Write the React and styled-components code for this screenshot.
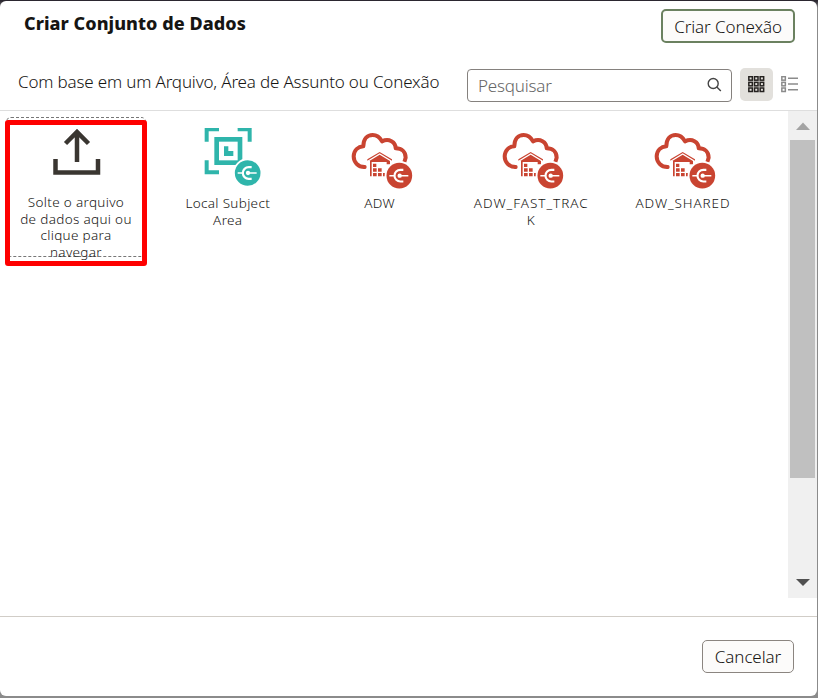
import React from "react";
import styled, { createGlobalStyle } from "styled-components";

const GlobalStyle = createGlobalStyle`
  * { box-sizing: border-box; }
  body { margin: 0; background: #8b8b8b; font-family: "Noto Sans", "Open Sans", sans-serif; font-weight: 300; }
  svg { display: block; flex: none; }
`;

const Backdrop = styled.div`
  width: 818px;
  height: 698px;
  padding: 1px 1px 2px 0;
  background: linear-gradient(#2b2730 0 1px, #8b8b8b 8px);
  overflow: hidden;
`;

const Dialog = styled.section`
  height: 695px;
  display: flex;
  flex-direction: column;
  background: #fff;
  border-radius: 6px;
  overflow: hidden;
`;

const TitleBar = styled.header`
  height: 58px;
  padding: 8px 22px 0 24px;
  display: flex;
  justify-content: space-between;
  align-items: flex-start;
`;

const Title = styled.h1`
  margin: 2px 0 0;
  font-size: 18px;
  line-height: 24px;
  font-weight: 800;
  letter-spacing: 0.05px;
  color: #161513;
`;

const Button = styled.button`
  width: ${(p) => p.$width};
  height: ${(p) => p.$height};
  padding: ${(p) => (p.$focused ? "2px 0 0" : "0")};
  border: ${(p) => (p.$focused ? "2px solid #6b8160" : "1px solid #8b8580")};
  border-radius: 5px;
  background: #fcfbfa;
  color: #161513;
  font: 300 17px/24px "Noto Sans", sans-serif;
  letter-spacing: -0.1px;
  white-space: nowrap;
`;

const Toolbar = styled.div`
  height: 52px;
  padding: 9px 11px 0 18px;
  display: flex;
  align-items: flex-start;
  border-bottom: 1px solid #dedede;
`;

const Caption = styled.div`
  width: 449px;
  padding-top: 2px;
  font-size: 17px;
  line-height: 24px;
  letter-spacing: -0.17px;
  color: #161513;
  white-space: nowrap;
`;

const SearchField = styled.label`
  width: 265px;
  height: 33px;
  margin: 1px 8px 0 0;
  padding: 0 9px 0 10px;
  display: flex;
  align-items: center;
  justify-content: space-between;
  border: 1px solid #85817e;
  border-radius: 4px;
`;

const SearchInput = styled.input`
  width: 180px;
  padding: 0;
  border: 0;
  outline: 0;
  background: transparent;
  font: 300 17px/24px "Noto Sans", sans-serif;
  letter-spacing: -0.2px;
  &::placeholder { color: #666; opacity: 1; }
`;

const ViewButton = styled.button`
  width: 33px;
  height: 33px;
  padding: 0;
  display: grid;
  place-items: center;
  border: 0;
  border-radius: 5px;
  background: ${(p) => (p.$active ? "#e2e0dc" : "transparent")};
`;

const Body = styled.main`
  height: 506px;
  display: flex;
  justify-content: space-between;
  border-bottom: 1px solid #d1cdc7;
`;

const Tiles = styled.div`
  display: grid;
  grid-template-columns: repeat(5, 151.75px);
  align-content: start;
  padding-top: 6px;
`;

const Tile = styled.div`
  position: relative;
  width: 140px;
  height: 140px;
  margin-left: 6px;
  padding-top: 10px;
  border: 1px dashed ${(p) => (p.$drop ? "#777" : "transparent")};
  border-radius: 5px;
  display: flex;
  flex-direction: column;
  align-items: center;
`;

const IconBox = styled.div`
  flex: none;
  height: ${(p) => p.$height || "67px"};
  padding-left: ${(p) => p.$indent};
  display: flex;
  align-items: flex-start;
`;

const Label = styled.div`
  flex: none;
  width: 118px;
  text-align: center;
  font-size: 13.5px;
  line-height: 16.7px;
  letter-spacing: ${(p) => p.$track || "0.33px"};
  color: #161513;
  white-space: nowrap;
`;

const Highlight = styled.div`
  position: absolute;
  top: 2px;
  left: -2px;
  width: 142px;
  height: 146px;
  border: 5px solid #fe0000;
  border-radius: 3px;
`;

const Scrollbar = styled.div`
  width: 29px;
  height: 487px;
  display: flex;
  flex-direction: column;
  align-items: center;
  justify-content: space-between;
  background: #f0f0f0;
  padding: 11px 0 12px;
`;

const Thumb = styled.div`
  width: 25px;
  height: 338px;
  margin: 10px 0 auto;
  background: #c0c0c0;
`;

const Footer = styled.footer`
  flex: 1;
  padding: 23px 23px 0 0;
  display: flex;
  justify-content: flex-end;
  align-items: flex-start;
`;

const SearchIcon = () => (
  <svg width="15" height="17" viewBox="0 0 15 17" fill="none" stroke="#444" strokeWidth="1.4">
    <circle cx="6.2" cy="6.5" r="5" />
    <path d="M9.8 10.1 13.8 14" />
  </svg>
);

const cells = [2, 19, 36];

const GridIcon = () => (
  <svg width="17" height="17" viewBox="0 2 51 51" fill="none" stroke="#24211f" strokeWidth="4.5">
    {cells.map((y) => cells.map((x) => <rect key={x + "-" + y} x={x + 0.5} y={y + 2} width="10.5" height="10.5" />))}
  </svg>
);

const ListIcon = () => (
  <svg width="17" height="17" viewBox="0 2 51 51" fill="none" stroke="#8b8b8b" strokeWidth="4.5">
    {cells.map((y) => (
      <g key={y}>
        <rect x="2.5" y={y + 2} width="10.5" height="10.5" />
        <path d={`M21 ${y + 7}h30`} />
      </g>
    ))}
  </svg>
);

const UploadIcon = () => (
  <svg width="48" height="48" viewBox="0 0 48 48" fill="none" stroke="#3a3631" strokeWidth="4.5">
    <path d="M24 34V4M12.5 15.5 24 4l11.5 11.5M2.5 31v13.5h42.5V31" />
  </svg>
);

const ConnectionBadge = ({ x, y, color }) => (
  <g transform={`translate(${x} ${y})`} fill="none">
    <circle r="44" fill="#fff" />
    <circle r="38.5" fill={color} />
    <g stroke="#fff">
      <path d="M12 -17.5H3A17.5 17.5 0 0 0 3 17.5H12" strokeWidth="6.5" />
      <path d="M0 0H27M-30 0H-16" strokeWidth="4.5" />
    </g>
    <circle cx="1" r="6.5" fill="#fff" />
  </g>
);

const SubjectIcon = () => (
  <svg width="58" height="60" viewBox="86 39 174 180">
    <g fill="none" stroke="#2fb5ab" strokeWidth="12">
      <path d="M94 80V43H131M187 43H223V80M94 136V172H131" />
      <rect x="124" y="73" width="70" height="70" strokeWidth="14" />
    </g>
    <path d="M146 94h13v14h15v15h-28z" fill="#2fb5ab" />
    <path d="M90 37H131V40H90ZM187 37H228V40H187Z" fill="#2fb5ab" />
    <ConnectionBadge x={217} y={174} color="#2fb5ab" />
  </svg>
);

const WarehouseIcon = () => (
  <svg width="64" height="62" viewBox="30 23 192 186">
    <path
      d="M76 140C53 141 41 124 41 108C42 90 54 79 70 78C70 56 82 44 98 44C111 44 120 52 126 63C147 53 167 65 167 84C186 84 197 96 197 112L193 125"
      fill="none" stroke="#c94431" strokeWidth="12" strokeLinejoin="round"
    />
    <circle cx="74" cy="140" r="6" fill="#c94431" />
    <g fill="#c94431">
      <path d="M82 117 119 95 156 117V121L119 99 82 121Z" />
      <path d="M88 122 119 103 150 122V132H140V125H95V168H90V122Z" />
      <path d="M99 130h10v10h-10zM99 144h11v10h-11zM114 144h11v10h-11zM99 158h11v10h-11zM114 158h11v10h-11zM129 158h10v10h-10z" />
    </g>
    <ConnectionBadge x={178} y={166} color="#c94431" />
  </svg>
);

const Arrow = ({ up }) => (
  <svg width="14" height="8" viewBox="0 0 14 8">
    {up ? <path d="M0 8 7 .5 14 8z" fill="#a3a3a3" /> : <path d="M0 1h14L7 8z" fill="#505050" />}
  </svg>
);

const connections = [
  { name: "ADW", lines: ["ADW"], track: "0.3px" },
  { name: "ADW_FAST_TRACK", lines: ["ADW_FAST_TRAC", "K"], track: "0.98px" },
  { name: "ADW_SHARED", lines: ["ADW_SHARED"], track: "0.9px" },
];

const Lines = ({ lines }) => lines.map((line) => <div key={line}>{line}</div>);

export default function App() {
  return (
    <>
      <GlobalStyle />
      <Backdrop>
        <Dialog>
          <TitleBar>
            <Title>Criar Conjunto de Dados</Title>
            <Button $focused $width="134px" $height="34px">Criar Conexão</Button>
          </TitleBar>
          <Toolbar>
            <Caption>Com base em um Arquivo, Área de Assunto ou Conexão</Caption>
            <SearchField>
              <SearchInput placeholder="Pesquisar" aria-label="Pesquisar" />
              <SearchIcon />
            </SearchField>
            <ViewButton $active aria-label="Grade"><GridIcon /></ViewButton>
            <ViewButton aria-label="Lista"><ListIcon /></ViewButton>
          </Toolbar>
          <Body>
            <Tiles>
              <Tile $drop>
                <IconBox $height="66px" $indent="1px"><UploadIcon /></IconBox>
                <Label><Lines lines={["Solte o arquivo", "de dados aqui ou", "clique para", "navegar"]} /></Label>
                <Highlight />
              </Tile>
              <Tile>
                <IconBox $indent="10px"><SubjectIcon /></IconBox>
                <Label><Lines lines={["Local Subject", "Area"]} /></Label>
              </Tile>
              {connections.map((c) => (
                <Tile key={c.name}>
                  <IconBox $indent="4px"><WarehouseIcon /></IconBox>
                  <Label $track={c.track}><Lines lines={c.lines} /></Label>
                </Tile>
              ))}
            </Tiles>
            <Scrollbar>
              <Arrow up />
              <Thumb />
              <Arrow />
            </Scrollbar>
          </Body>
          <Footer>
            <Button $width="92px" $height="33px">Cancelar</Button>
          </Footer>
        </Dialog>
      </Backdrop>
    </>
  );
}
